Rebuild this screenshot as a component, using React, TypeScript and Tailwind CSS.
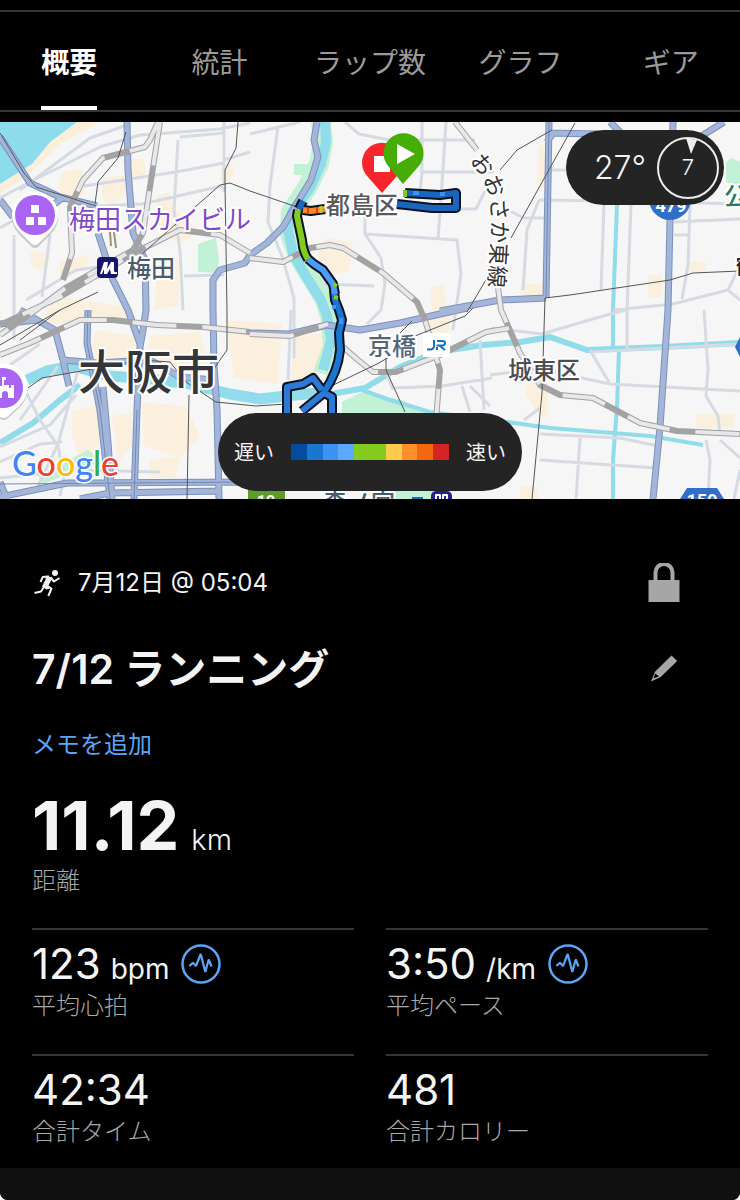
import React, { useState } from "react";

const tabs = ["概要", "統計", "ラップ数", "グラフ", "ギア"];

const paceColors = [
  "#054b9e",
  "#1b76d2",
  "#3d92f3",
  "#5aa9ff",
  "#84cb20",
  "#84cb20",
  "#ffcb4c",
  "#ff8f2b",
  "#f0690f",
  "#d62323",
];

const stats = [
  { value: "123", unit: "bpm", label: "平均心拍", chart: true },
  { value: "3:50", unit: "/km", label: "平均ペース", chart: true },
  { value: "42:34", label: "合計タイム" },
  { value: "481", label: "合計カロリー" },
];

const blocks = [
  "M62 172l20-4 4 26-16 8-12-14z",
  "M102 178l26-4v20l-18 12-8-8z",
  "M122 160l22-2 2 18-18 6z",
  "M156 196l12-4 6 16 26 24-22 12-18-14z",
  "M222 162l14 6-6 14-10-2z",
  "M158 256l22 4-2 46-24 4z",
  "M60 262l30-8-4 14-26 10z",
  "M28 250l22 4-4 18-14-6z",
  "M54 296l80 12-6 14H70l-30 4z",
  "M96 330l38 6 4 26-34 10-12-26z",
  "M150 336l50-4 8 30-40 14-22-12z",
  "M72 412l24-8 8 44-24 16-8-30z",
  "M112 416l20-4v34l-14 16z",
  "M142 402l44 4 14 30-20 22-36-12z",
  "M150 460l30-4-4 22h-28z",
  "M226 320l56 4-4 60-44-6z",
  "M296 336l32-4-6 38-18 12-14-4z",
  "M250 440l20 6-2 36-22-2z",
  "M325 238l28 4-4 30-22 2-10-18z",
  "M430 288l12-4 6 24-16 6z",
  "M424 318l28-6-4 22-22 4z",
  "M538 145h14v42h-14z",
  "M520 284h30v14h-28z",
  "M648 274l14 2v22h-14z",
  "M690 262h16v10h-16z",
  "M526 383h22v34h-8l-14-22z",
  "M696 414h38v14h-38z",
  "M520 486h18v13h-18z",
];

const parks = [
  "M0 174l12-4 6 8-18 16z",
  "M198 244l18-6 3 22-2 13-19-1z",
  "M294 164h24v11h-24z",
  "M38 476l50-26 14 10-34 14-24 10z",
  "M726 162l6-4 8 4v26l-14-6z",
  "M342 402l20-10 40 8 30 14h-90z",
  "M394 490h40v9h-40z",
];

const minorRoads = [
  "M0 198l30-16 70-35 40-12 80-6 30-6",
  "M20 190l70-52 40-14",
  "M98 206l44-2 80-18",
  "M84 186l92-14 48-9",
  "M178 140l-4 70 6 40 3 60",
  "M224 122v70M250 152l-26 8",
  "M180 137l44-4M0 228l14-8M14 235v75",
  "M50 235l-8 62M26 300l50-30 30-4",
  "M184 276l40-1",
  "M0 372l40-28M14 340v-30M20 420l38-54M20 380l20 40 18 26 6 30-4 20",
  "M0 447l50-22 26-30M0 462l40-18 22-2M78 370l-20 74-20 42",
  "M0 478l80-8 80 2",
  "M278 126l-8 60-2 36 14 34 12 42v60",
  "M250 134l50-12M345 122l14 12 30 6",
  "M422 122v50l-2 20M446 122l-4 62-4 56",
  "M415 140h60M420 172h74M456 209h20l12-24",
  "M365 234l92 6 4 34-8 56M365 200v34l16 24 4 26-4 26-14 14",
  "M324 284l50 2",
  "M291 310l-3 70",
  "M386 372l6 16 50-2 50-8M462 386l8 26M470 386l20 20M480 340l4 70",
  "M550 170h32M539 200l82 1 119 3M539 200l-12 30-4 60M508 210l16 8h20",
  "M604 205l-3 85M631 205l-4 105v40M674 222l66-3M690 205l-2 60-6 34M674 235h14",
  "M613 310l60-6 55-14 12-24M728 290l12 10",
  "M492 328l50 6 54-16 30-8M490 375l50-6 70 15 130 7",
  "M590 350l20 34M704 310l4 60-2 26 12 20 2 18M590 352l74-4 76-4",
  "M540 434l80 4 38 8M540 460l116 8M580 438l-4 61M524 420l16-12",
  "M720 440l20 18M706 440l4 20-2 39M740 470l-6 29",
];

const majorRoads = [
  "M127 122l1 48 5 63 12 27 1 50-3 20-3 17-3 63-3 89",
  "M128 310l12 34",
  "M0 137l17 26 13 20 30 14 37 9",
  "M98 233l15 47 15 30",
  "M0 200l13 17M52 206l10-8",
  "M0 324l37-4 18 10 8 30 34 3 53-3 30 17 33 3",
  "M20 310l17 10M63 360l6 26",
  "M88 310l-1 33 13 67 10 89",
  "M103 387l5 56 4 56",
  "M0 497l67-14 183-1 70 4M80 499l30-6 110-2M0 482l7 17",
  "M317 122l-3 18 4 17-7 23-14 23-14 24-16 16-17 12-5 8-25 7-7 10v30l1 55 3 45 2 89",
  "M549 122l-3 176M547 133l50 1M547 142l6-9",
  "M673 122l-3 98-2 90-8 117-7 72",
  "M610 122l10 10M724 122l-24 15-20 12",
  "M250 333l40 1 37-9 33 5 40-7 67-15M440 311l60-11 46-2",
];

const rails = [
  "M158 122l-8 18-5 7-42 11-20 22-13 27 2 46-9 27",
  "M160 122l-10 65-7 46-10 17-66 37-27 20-40 28",
  "M250 253l-30-18-40-5-40 20-80 47-60 28",
  "M0 355l30-12 50-23 33 0 44 5 46 2 47 5",
  "M250 258l33 4 27-14 20-3 13 3 40 25 34 29 8 18 15 50-4 50",
  "M250 334l40 2 38-12M343 347l15 13 15 12h23l44-17 46-23 24-4",
  "M455 122l22 28M497 280l4 30 19 43 20 32 20 10 33 3 47 25 37 8 63 3",
];

const thinRails = [
  "M126 132l-8 26-20 24-3 22",
  "M238 122l-2 26-11 22v14l2 126v40l-14 20",
  "M142 254l78-69 10-2 20 8 50 17",
  "M575 123l-64 115",
  "M552 130l-35 20-17 20",
  "M545 298l25-3 100-15 23-7 47-2",
  "M0 133l24 40 12 14 60 19",
  "M60 310l-40 30M0 345l60-35 38-18",
  "M327 388l50-24 14-8M386 358l0 12 19 42",
  "M400 333l12-12M415 336l50-20 8-8",
  "M487 278l-20 34",
  "M28 388l14-10 100-18 28 2 16 20 30 20 40 4 30-2",
  "M189 395l-2 104M545 298l-3 95-10 106",
];

const route = [
  { d: "M405 193l35 2 16-2v15l-24 0-35-4", color: "#1b66bd" },
  { d: "M287 415v-28l16-3 10-6 9 12M332 415v-18l-8-4-22 18", color: "#2b7bd6" },
  { d: "M334 290l1 10 4 10 3 10-3 13 1 17q-2 22-16 42", color: "#1b76d2" },
  { d: "M308 259l6 5 9 6 10 14 2 10", color: "#4a9cf8" },
  { d: "M298 210l-1 6 5 24q1 12 6 19", color: "#84cb20" },
  { d: "M325 209l-14 2-8-1", color: "#f98a23" },
  { d: "M303 201l-4 8", color: "#1b66bd" },
];

function RouteMap() {
  return (
    <svg
      viewBox="0 122 740 377"
      className="block aspect-[740/377] w-full"
      role="img"
      aria-label="大阪市 ルート"
      fontFamily="'Noto Sans CJK JP', sans-serif"
      strokeLinejoin="round"
    >
      <rect y="122" width="740" height="377" fill="#f6f6f7" />
      <path d={blocks.join("")} fill="#fbf0de" />
      <path d={parks.join("")} fill="#c3f1d5" />
      <path d="M0 122h100L60 144 32 172 0 194z" fill="#fbefda" />
      <path d="M0 122h77L50 142 32 164 0 184z" fill="#8ddcec" />

      {/* rivers */}
      <g fill="none">
        <path
          d="M321 122l2 20-4 22-12 24-16 24-1 22 8 22 15 24 12 20 6 20 2 26-10 28"
          stroke="#c3f1d5"
          strokeWidth="20"
        />
        <g stroke="#90dcea">
          <path
            d="M325 122l1 20-5 22-11 24-18 24-4 18 5 24 14 24 14 22 6 16 4 24-8 30"
            strokeWidth="10"
          />
          <path d="M0 443l33-20 27-23 20-15" strokeWidth="6" />
          <path d="M27 380l20-9 26-5 37 10 40 3 40 5 40 10 30 5 35-4 35-3" strokeWidth="11" />
          <path d="M320 396l45-8 35-21 37-15 46-7 37-3 30-5 37 13 76-3 77-4" strokeWidth="6" />
          <path d="M362 390l28 10 40 12 77 10 43 6 100 8 53 9" strokeWidth="4" />
          <path d="M617 205l-4 105v37M619 350l-2 57-4 53v39" strokeWidth="4" />
        </g>
      </g>

      <g fill="none">
        <path d={minorRoads.join("")} stroke="#d6dbe3" strokeWidth="3" />
        <path d={majorRoads.join("")} stroke="#7b91bb" strokeWidth="7" />
        <path d={majorRoads.join("")} stroke="#a3b5d9" strokeWidth="5" />
        <path
          d="M549 122l-3 176M88 310l-1 33 13 67 10 89M137 410l-3 89M0 484l250-2"
          stroke="#7088b6"
          strokeWidth="1"
        />
        <path d={rails.join("")} stroke="#a3a3a3" strokeWidth="6" />
        <path d={rails.join("")} stroke="#e8e7e9" strokeWidth="4" strokeDasharray="44 26" />
        <path d={thinRails.join("")} stroke="#555" strokeWidth="1" />
        <path d="M110 232l1 14M114 232l2 16" stroke="#a09078" strokeWidth="2" />
      </g>

      {/* activity route */}
      <g fill="none">
        <path d={route.map((r) => r.d).join("")} stroke="#0a1220" strokeWidth="10" />
        {route.map((r) => (
          <path key={r.d} d={r.d} stroke={r.color} strokeWidth="6" />
        ))}
        <path d="M405 190v7M333 284l4 2M334 297l4 1" stroke="#84cb20" strokeWidth="4" />
        <path d="M413 193h6M440 194h5M334 305v4M341 318v6" stroke="#3d92f3" strokeWidth="4" />
        <path d="M308 208v6M317 207v6" stroke="#e0401a" strokeWidth="2" />
        <path d="M321 206v7" stroke="#b8d030" strokeWidth="3" />
      </g>

      {/* road shields */}
      <circle cx="670" cy="199" r="21" fill="#2f6fc9" />
      <path d="M687 488h30l7 11h-44z" fill="#2f6fc9" />
      <path d="M735 347l5-10v20z" fill="#2f6fc9" />
      <rect x="248" y="490" width="37" height="14" fill="#5f9a2c" />
      <g fill="#fff" fontFamily="Roboto, sans-serif" fontWeight="700" textAnchor="middle">
        <text x="671" y="212" fontSize="18">479</text>
        <text x="702" y="507" fontSize="18">159</text>
        <text x="266" y="507" fontSize="16">19</text>
      </g>

      {/* place names */}
      <g stroke="#fff" strokeWidth="4" paintOrder="stroke" fontWeight="500">
        <text x="69" y="229" fontSize="26" fontWeight="400" fill="#8148c8">梅田スカイビル</text>
        <text x="127" y="277" fontSize="24" fill="#475d6d">梅田</text>
        <text x="326" y="214" fontSize="24" fill="#58595c">都島区</text>
        <text x="368" y="355" fontSize="24" fill="#566575">京橋</text>
        <text x="508" y="379" fontSize="24" fill="#4c4d50">城東区</text>
        <text x="323" y="511" fontSize="24" fill="#475d6d">森ノ宮</text>
        <text x="78" y="389" fontSize="47" fill="#353639">大阪市</text>
        <text x="724" y="205" fontSize="24" fill="#2c7a58">公園</text>
        <text x="736" y="274" fontSize="22" fill="#222">鶴見</text>
        <path id="osaka-higashi" d="M469 161Q486 178 490 200T488 290" fill="none" stroke="none" />
        <text fontSize="22" fontWeight="400" fill="#333">
          <textPath href="#osaka-higashi">おおさか東線</textPath>
        </text>
      </g>

      {/* station and place markers */}
      <rect x="423" y="333" width="27" height="24" fill="#fff" />
      <path
        d="M434 340v5.500q0 4-4 4h-3M437 350v-3M437 341h5q3 0 3 2.200t-3 2.300h-5.500M440 346l5 4"
        fill="none"
        stroke="#0d74c4"
        strokeWidth="2"
      />
      <rect x="97" y="257" width="21" height="21" rx="4" fill="#15156f" />
      <path d="M100 274l4-12h4l-1 7 4-7h3v9q1 2 3 1v2h-6l-1-5-3 5h-3v-5l-2 5z" fill="#fff" />
      <rect x="431" y="491" width="21" height="21" rx="5" fill="#23238f" />
      <path d="M436 500v-5h4v5M443 500v-5h4v5" fill="none" stroke="#fff" strokeWidth="2" />
      <rect x="412" y="497" width="11" height="4" fill="#0d74c4" />

      <path d="M32 245L19 232a23 23 0 1 1 32 0L38 245q-3 2-6 0z" fill="#777" opacity=".35" transform="translate(0 2)" />
      <path d="M32 244L19 231a23 23 0 1 1 32 0L38 244q-3 2-6 0z" fill="#fff" />
      <circle cx="35" cy="215" r="20" fill="#a964f4" />
      <path d="M31 205h8v8h-8zM26 217h8v8h-8zM38 217h8v8h-8z" fill="#fff" />
      <path d="M0 417L-13 405a24 24 0 1 1 33 0L7 417q-3 2-7 0z" fill="#777" opacity=".35" transform="translate(0 2)" />
      <path d="M0 417L-13 405a24 24 0 1 1 33 0L7 417q-3 2-7 0z" fill="#fff" />
      <circle cx="3" cy="388" r="20" fill="#a964f4" />
      <path d="M0 386h2v-9h4v3H4v5h5v3h2v-3h3v13H8v-4a3 3 0 0 0-6 0v4H-8v-10z" fill="#fff" />

      {/* finish and start pins */}
      <path d="M382 193l-14-16a20 20 0 1 1 28 0z" fill="#f9252c" />
      <rect x="374" y="156" width="16" height="16" fill="#fff" />
      <path d="M403 184l-14-17a20 20 0 1 1 29 0z" fill="#45ad05" />
      <path d="M397 144l18 10-18 10z" fill="#fff" />

      <text
        x="12"
        y="476"
        fontFamily="Lato, sans-serif"
        fontSize="34"
        stroke="#fff"
        strokeWidth="3"
        paintOrder="stroke"
        fontWeight="500"
      >
        <tspan fill="#4285f4">G</tspan>
        <tspan fill="#ea4335">o</tspan>
        <tspan fill="#fbbc05">o</tspan>
        <tspan fill="#4285f4">g</tspan>
        <tspan fill="#34a853">l</tspan>
        <tspan fill="#ea4335">e</tspan>
      </text>
    </svg>
  );
}

function RunnerIcon() {
  return (
    <svg
      viewBox="0 0 30 30"
      className="h-[30px] w-[30px]"
      fill="none"
      stroke="#f2f2f2"
      strokeWidth="2"
      strokeLinejoin="round"
    >
      <circle cx="23" cy="5" r="3" fill="#f2f2f2" stroke="none" />
      <path d="M14 7.500l6.500 2.300-4 7.700 3 2.500-5 1.500-4.500-3 3.500-7z" fill="#f2f2f2" stroke="none" />
      <path d="M17 8.500l-6.300.6L8.500 14M18.500 9.500l3.500 4 5.500-3.500" />
      <path d="M15 18l4.500 2.500L16.300 28M12.500 18l-3.500 5.500-6.500 1.500" />
    </svg>
  );
}

function LockIcon() {
  return (
    <svg viewBox="0 0 40 40" className="h-10 w-10">
      <path d="M11.500 18v-8.500a8.500 8.500 0 0 1 17 0V18" fill="none" stroke="#a6a6a6" strokeWidth="4" />
      <path d="M4.500 17h31v22h-31z" fill="#a6a6a6" />
    </svg>
  );
}

function PencilIcon() {
  return (
    <svg viewBox="0 0 40 40" className="h-10 w-10">
      <path
        d="M27.500 6.500l5.700 5.500-16.500 16L7 32.500l4-9.700zM11.300 24.500L9.600 29.200l5.400-1.700z"
        fill="#a6a6a6"
        fillRule="evenodd"
      />
    </svg>
  );
}

function WaveIcon() {
  return (
    <svg viewBox="0 0 40 40" className="h-10 w-10" fill="none" stroke="#5aa5f5">
      <circle cx="20" cy="20" r="18.500" strokeWidth="2.500" />
      <path
        d="M8.300 22l3.700-3.300 3 3.300 4.700-12 4.600 18 3.400-12.500 2.800 7"
        strokeWidth="2.200"
        strokeLinejoin="bevel"
      />
    </svg>
  );
}

export default function App() {
  const [activeTab, setActiveTab] = useState(0);

  return (
    <div className="min-h-screen bg-white font-['Inter','Noto_Sans_CJK_JP',sans-serif]">
      <div className="flex min-h-screen flex-col overflow-hidden rounded-b-lg bg-black text-[#f4f4f4]">
        <nav className="mt-2.5 overflow-hidden border-y-2 border-[#363636]">
          <div role="tablist" className="-mx-1.5 grid grid-cols-5">
            {tabs.map((tab, index) => (
              <div key={tab} className="flex justify-center">
                <button
                  role="tab"
                  aria-selected={index === activeTab}
                  onClick={() => setActiveTab(index)}
                  className={`h-[98px] cursor-pointer border-b-4 pt-2 text-[28px] whitespace-nowrap ${
                    index === activeTab
                      ? "border-white font-bold text-white"
                      : "border-transparent text-[#9b9b9b]"
                  }`}
                >
                  {tab}
                </button>
              </div>
            ))}
          </div>
        </nav>

        <div className="relative mt-2.5">
          <RouteMap />
          <div className="absolute top-2 right-4 flex h-[75px] items-center gap-2.5 rounded-full bg-[#242424] pr-1 pl-7">
            <span className="text-[32px] font-light">27°</span>
            <div className="relative flex h-16 w-16 items-center justify-center">
              <svg viewBox="0 0 64 64" className="absolute inset-0">
                <circle cx="32" cy="32" r="30" fill="none" stroke="#eee" strokeWidth="2" />
                <path d="M30 2l11 2-6 14z" fill="#eee" />
              </svg>
              <span className="text-[22px] font-light">7</span>
            </div>
          </div>
          <div className="absolute bottom-2 left-1/2 flex h-[78px] w-[304px] -translate-x-1/2 items-center justify-between rounded-full bg-[#242424] px-4 text-[20px]">
            <span className="pt-0.5">遅い</span>
            <div className="flex h-4 w-[158px]">
              {paceColors.map((color, index) => (
                <div key={index} className="flex-1" style={{ backgroundColor: color }} />
              ))}
            </div>
            <span className="pt-0.5">速い</span>
          </div>
        </div>

        <main className="px-8 pt-16">
          <div className="flex items-center justify-between">
            <div className="flex items-center gap-4">
              <RunnerIcon />
              <span className="text-[24px] leading-8">7月12日 @ 05:04</span>
            </div>
            <button aria-label="プライバシー" className="mr-6 cursor-pointer">
              <LockIcon />
            </button>
          </div>

          <div className="mt-[42px] flex items-center justify-between">
            <h1 className="text-[41px] leading-12 font-semibold">7/12 ランニング</h1>
            <button aria-label="編集" className="mr-6 cursor-pointer">
              <PencilIcon />
            </button>
          </div>

          <button className="mt-9 block cursor-pointer text-[24px] leading-8 text-[#5aa5f5]">
            メモを追加
          </button>

          <div className="mt-8 flex items-baseline gap-3">
            <span className="text-[68px] leading-16 font-bold">11.12</span>
            <span className="text-[29px] leading-8 font-light">km</span>
          </div>
          <p className="mt-2 text-[24px] leading-8 font-light text-[#a8a8a8]">距離</p>

          <div className="mt-[31px] grid grid-cols-2 gap-x-8 gap-y-3 pb-5">
            {stats.map((stat) => (
              <div key={stat.label} className="border-t-2 border-[#363636] pt-3.5">
                <div className="flex h-10 gap-3">
                  <div className="flex items-baseline gap-2.5">
                    <span className="text-[42px] leading-10">{stat.value}</span>
                    {stat.unit && <span className="text-[28px] leading-10">{stat.unit}</span>}
                  </div>
                  {stat.chart && (
                    <button aria-label={`${stat.label} グラフ`} className="cursor-pointer">
                      <WaveIcon />
                    </button>
                  )}
                </div>
                <p
                  className={`mt-1.5 text-[24px] leading-8 font-light text-[#a8a8a8] ${
                    stat.chart ? "mb-5" : ""
                  }`}
                >
                  {stat.label}
                </p>
              </div>
            ))}
          </div>
        </main>

        <div className="min-h-8 flex-1 bg-[#101010]" />
      </div>
    </div>
  );
}
